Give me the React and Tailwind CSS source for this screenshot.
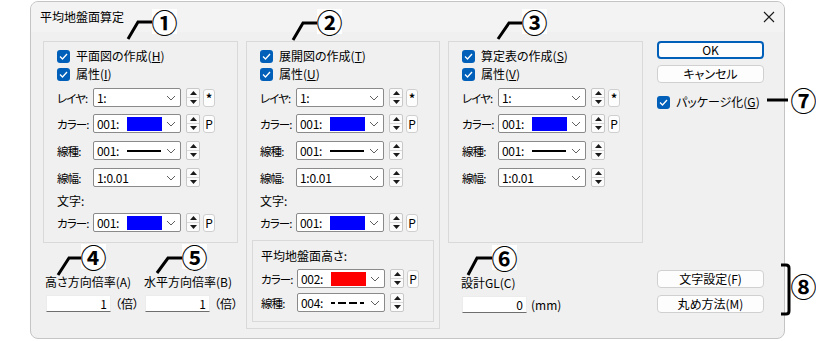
import React from 'react';

const Check = () => (
  <span className="w-[13px] h-[13px] rounded-[3px] bg-[#005fb8] flex items-center justify-center shrink-0">
    <svg width="9" height="7" viewBox="0 0 9 7">
      <path d="M1 3.5 L3.5 6 L8 1" stroke="white" strokeWidth="1.3" fill="none" />
    </svg>
  </span>
);

const CheckRow = ({ text, accel, className = '' }) => (
  <div className={`flex items-center gap-[6px] h-[14px] whitespace-nowrap ${className}`}>
    <Check />
    <span>
      {text}(<span className="underline">{accel}</span>)
    </span>
  </div>
);

const Chevron = () => (
  <svg width="10" height="6" viewBox="0 0 10 6" className="ml-auto shrink-0">
    <path d="M1 1 L5 5 L9 1" stroke="#606060" strokeWidth="1" fill="none" />
  </svg>
);

const Combo = ({ value, swatch, line }) => (
  <div className="w-[88px] h-[19px] bg-white border border-[#8a8a8a] rounded-[2px] flex items-center pl-[3px] pr-[4px] shrink-0">
    <span className="w-[30px] shrink-0 tracking-[-0.3px]">{value}</span>
    {swatch === 'blue' && <span className="w-[35px] h-[14px] bg-[#0000ff]" />}
    {swatch === 'red' && <span className="w-[35px] h-[14px] bg-[#ff0000]" />}
    {line === 'solid' && (
      <svg width="35" height="4" viewBox="0 0 35 4">
        <line x1="0" y1="2" x2="34" y2="2" stroke="black" strokeWidth="2" />
      </svg>
    )}
    {line === 'dash' && (
      <svg width="35" height="4" viewBox="0 0 35 4">
        <line x1="0" y1="2" x2="33" y2="2" stroke="black" strokeWidth="2" strokeDasharray="8 3" strokeDashoffset="4" />
      </svg>
    )}
    <Chevron />
  </div>
);

const Spinner = () => (
  <div className="ml-[5px] w-[14px] h-[19px] border border-[#c8c8c8] rounded-[2px] bg-[#fbfbfb] flex flex-col shrink-0">
    <div className="flex-1 flex items-center justify-center border-b border-[#d8d8d8]">
      <svg width="7" height="4" viewBox="0 0 7 4"><path d="M0 4 L3.5 0 L7 4 Z" fill="#1a1a1a" /></svg>
    </div>
    <div className="flex-1 flex items-center justify-center">
      <svg width="7" height="4" viewBox="0 0 7 4"><path d="M0 0 L3.5 4 L7 0 Z" fill="#1a1a1a" /></svg>
    </div>
  </div>
);

const SmallBtn = ({ children, bold }) => (
  <div className={`ml-[3px] w-[12px] h-[18px] border border-[#cfcfcf] rounded-[3px] bg-[#fdfdfd] flex items-center justify-center shrink-0 leading-none ${bold ? 'font-bold' : ''}`}>
    {children}
  </div>
);

const Row = ({ label, value, swatch, line, btn, className = '' }) => (
  <div className={`flex items-center h-[19px] ${className}`}>
    <span className="w-[36px] shrink-0 whitespace-nowrap text-[11.5px] tracking-[-0.9px]">{label}</span>
    <Combo value={value} swatch={swatch} line={line} />
    <Spinner />
    {btn && <SmallBtn bold={btn === '*'}>{btn}</SmallBtn>}
  </div>
);

const Field = ({ label, value, unit, className = '' }) => (
  <div className={`flex flex-col whitespace-nowrap ${className}`}>
    <span className="leading-[16px]">{label}</span>
    <div className="flex items-center mt-[5px] pl-[1px]">
      <div className="w-[65px] h-[17px] bg-white border border-[#ececec] border-b-[#6e6e6e] text-right pr-[3px] leading-[15px]">
        {value}
      </div>
      <span className="ml-[4px]">{unit}</span>
    </div>
  </div>
);

const Button = ({ children, primary, className = '' }) => (
  <div
    className={`w-[107px] h-[18px] rounded-[4px] bg-[#fdfdfd] flex items-center justify-center leading-none ${
      primary ? 'border-2 border-[#005fb8]' : 'border border-[#d0d0d0]'
    } ${className}`}
  >
    {children}
  </div>
);

const Circled = ({ children, className }) => (
  <span className={`absolute w-[25px] h-[25px] bg-white flex items-center justify-center text-[26px] font-bold leading-none ${className}`}>
    {children}
  </span>
);

export default function App() {
  return (
    <div className="relative w-[816px] h-[341px] bg-white overflow-hidden text-[12px] leading-[16px] text-black font-['Noto_Sans_CJK_JP','Noto_Sans',sans-serif] [font-feature-settings:'palt']">
      <div className="ml-[30px] mt-[1px] w-[755px] h-[338px] border border-[#c4c4c4] rounded-[8px] bg-[#f0f0f0] flex flex-col overflow-hidden">
        {/* title bar */}
        <div className="h-[30px] bg-[#f3f3f3] flex items-center pl-[9px] pr-[8px]">
          <span>平均地盤面算定</span>
          <svg width="12" height="12" viewBox="0 0 12 12" className="ml-auto mr-[1px]">
            <path d="M1 1 L11 11 M11 1 L1 11" stroke="#1a1a1a" strokeWidth="1.1" />
          </svg>
        </div>

        {/* body */}
        <div className="flex pt-[9px] pl-[12px]">
          {/* column 1 */}
          <div className="w-[195px] flex flex-col">
            <div className="h-[202px] border border-[#d9d9d9] flex flex-col pl-[13px] pt-[7px]">
              <CheckRow text="平面図の作成" accel="H" />
              <CheckRow text="属性" accel="I" className="mt-[4px]" />
              <Row label="レイヤ:" value="1:" btn="*" className="mt-[7px]" />
              <Row label="カラー:" value="001:" swatch="blue" btn="P" className="mt-[7px]" />
              <Row label="線種:" value="001:" line="solid" className="mt-[8px]" />
              <Row label="線幅:" value="1:0.01" className="mt-[8px]" />
              <span className="mt-[6px]">文字:</span>
              <Row label="カラー:" value="001:" swatch="blue" btn="P" className="mt-[4px]" />
            </div>
            <div className="flex mt-[31px] ml-[2px]">
              <Field label="高さ方向倍率(A)" value="1" unit="（倍）" className="w-[100px]" />
              <Field label="水平方向倍率(B)" value="1" unit="（倍）" />
            </div>
          </div>

          {/* column 2 */}
          <div className="w-[194px] ml-[8px] h-[288px] border border-[#d9d9d9] flex flex-col px-[13px] pt-[7px]">
            <CheckRow text="展開図の作成" accel="T" />
            <CheckRow text="属性" accel="U" className="mt-[4px]" />
            <Row label="レイヤ:" value="1:" btn="*" className="mt-[7px]" />
            <Row label="カラー:" value="001:" swatch="blue" btn="P" className="mt-[7px]" />
            <Row label="線種:" value="001:" line="solid" className="mt-[8px]" />
            <Row label="線幅:" value="1:0.01" className="mt-[8px]" />
            <span className="mt-[6px]">文字:</span>
            <Row label="カラー:" value="001:" swatch="blue" btn="P" className="mt-[4px]" />
            <div className="-mx-[8px] mt-[8px] h-[82px] border border-[#d9d9d9] flex flex-col pl-[8px] pt-[7px]">
              <span>平均地盤面高さ:</span>
              <Row label="カラー:" value="002:" swatch="red" btn="P" className="mt-[5px]" />
              <Row label="線種:" value="004:" line="dash" className="mt-[5px]" />
            </div>
          </div>

          {/* column 3 */}
          <div className="w-[195px] ml-[8px] flex flex-col">
            <div className="h-[202px] border border-[#d9d9d9] flex flex-col pl-[13px] pt-[7px]">
              <CheckRow text="算定表の作成" accel="S" />
              <CheckRow text="属性" accel="V" className="mt-[4px]" />
              <Row label="レイヤ:" value="1:" btn="*" className="mt-[7px]" />
              <Row label="カラー:" value="001:" swatch="blue" btn="P" className="mt-[7px]" />
              <Row label="線種:" value="001:" line="solid" className="mt-[8px]" />
              <Row label="線幅:" value="1:0.01" className="mt-[8px]" />
            </div>
            <Field label="設計GL(C)" value="0" unit="(mm)" className="mt-[32px] ml-[13px]" />
          </div>

          {/* column 4 */}
          <div className="w-[107px] ml-[14px] flex flex-col">
            <Button primary>OK</Button>
            <Button className="mt-[6px]">キャンセル</Button>
            <CheckRow text="パッケージ化" accel="G" className="mt-[12px]" />
            <Button className="mt-[161px]">文字設定(F)</Button>
            <Button className="mt-[7px]">丸め方法(M)</Button>
          </div>
        </div>
      </div>

      {/* annotations */}
      <svg className="absolute inset-0 pointer-events-none" width="816" height="341" viewBox="0 0 816 341">
        <g stroke="black" strokeWidth="3" fill="none">
          <path d="M128 39 L138 22 H153" />
          <path d="M293 40 L303 23 H318" />
          <path d="M498 39 L509 23 H523" />
          <path d="M58 275 L69 258 H82" />
          <path d="M157 273 L168 258 H183" />
          <path d="M468 275 L477 258 H492" />
          <path d="M767 100 H788" />
          <path d="M781 265 H786 Q789 265 789 268 V311 Q789 314 786 314 H781" />
        </g>
      </svg>
      <Circled className="left-[152px] top-[9px]">①</Circled>
      <Circled className="left-[317px] top-[9px]">②</Circled>
      <Circled className="left-[522px] top-[9px]">③</Circled>
      <Circled className="left-[81px] top-[244px]">④</Circled>
      <Circled className="left-[182px] top-[244px]">⑤</Circled>
      <Circled className="left-[492px] top-[245px]">⑥</Circled>
      <Circled className="left-[791px] top-[87px]">⑦</Circled>
      <Circled className="left-[791px] top-[273px]">⑧</Circled>
    </div>
  );
}
